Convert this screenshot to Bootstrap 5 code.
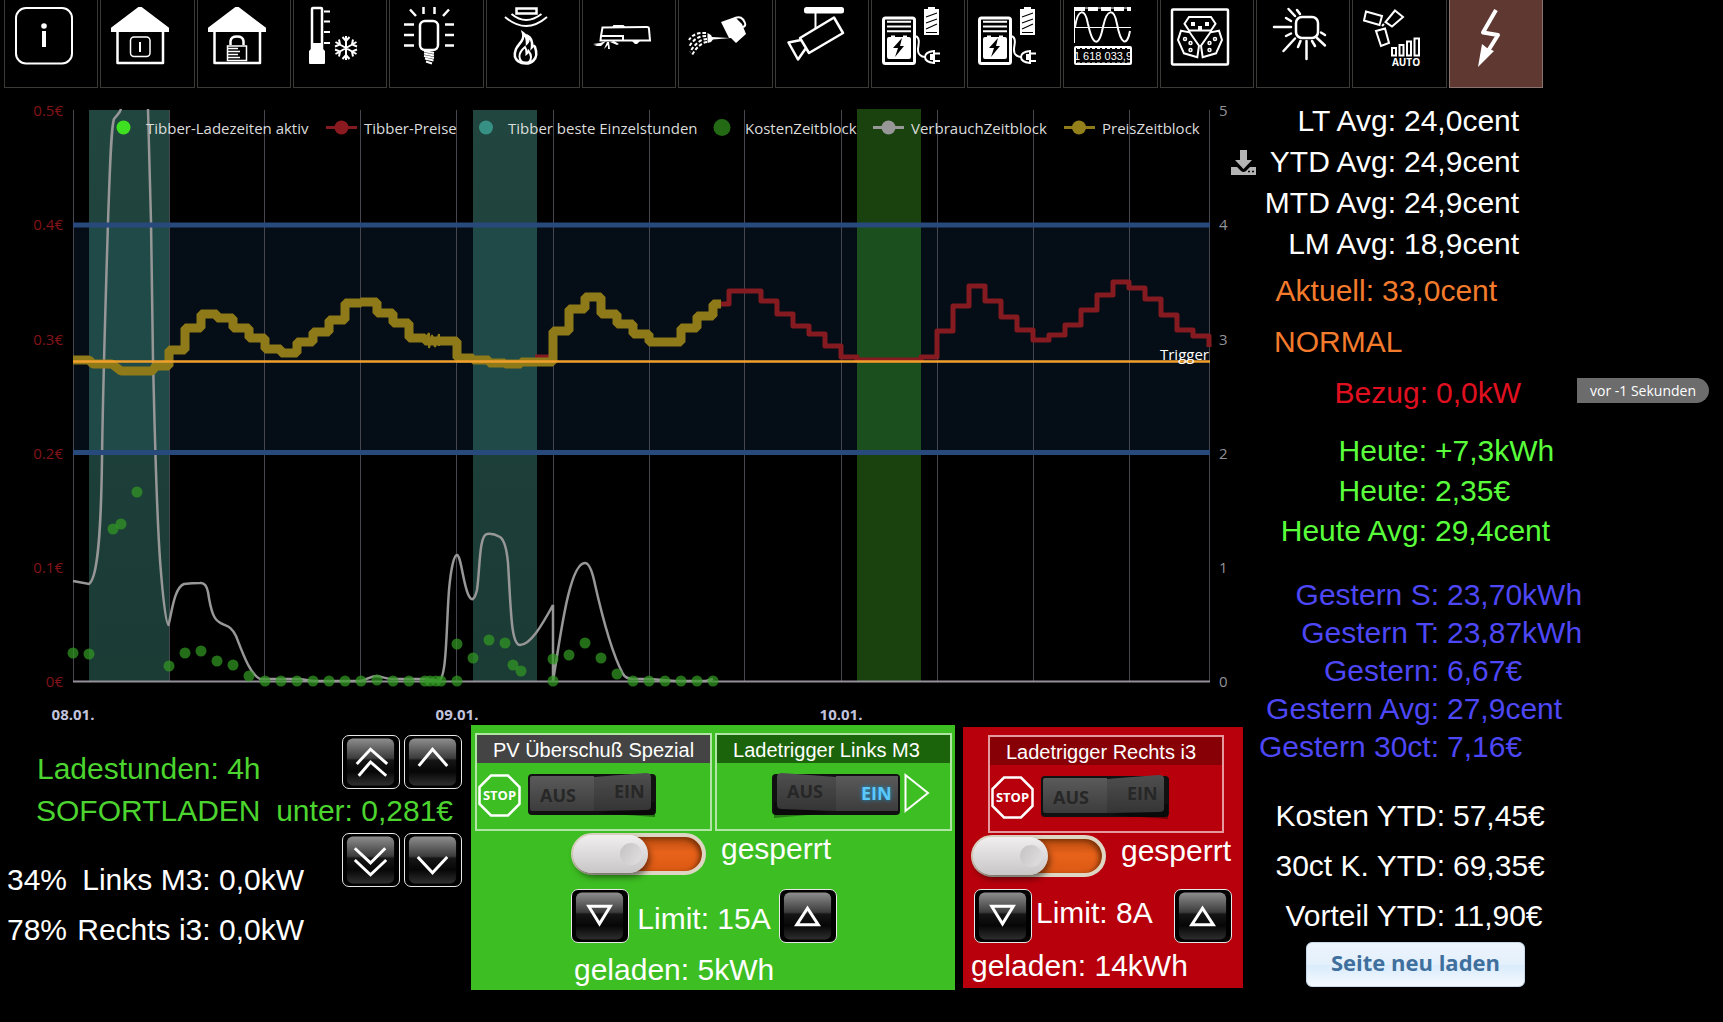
<!DOCTYPE html>
<html lang="de">
<head>
<meta charset="utf-8">
<meta name="viewport" content="width=device-width, initial-scale=1">
<title>Strompreise</title>
<link href="https://cdn.jsdelivr.net/npm/bootstrap@5.3.0/dist/css/bootstrap.min.css" rel="stylesheet">
<style>
body{background:#000;color:#fff;font-family:"Liberation Sans",Arial,sans-serif;font-size:30px}
.tiles{padding:0 180px 0 4px;gap:2px}
.tile{flex:1 1 0;min-width:0;height:88px;padding:7px 0 0 10px;border:1px solid #3a3a37;border-top:0;color:#fff}
.tile.active{background:#5e3831;border-color:#8b746f}
.tile svg{display:block;width:58px;height:58px;overflow:visible;fill:none;stroke:currentColor;stroke-width:2}
.tile .solid{fill:currentColor;stroke:none}
.tile .bold-lines{stroke-width:3}
.chart{display:block;width:100%;height:auto;font-family:"Open Sans","Noto Sans",sans-serif;font-size:15px}
.values{flex:0 0 465px}
.val-name{text-align:right;padding-right:8px}
.g-avg{margin-top:12px;line-height:41px}
.g-avg .val-name{width:146px}
.g-now{margin-top:1px;line-height:51px;color:#f47b2c}
.g-now .val-name{width:124px}
.g-now .bezug{color:#e01020}
.g-now .bezug .val-name{width:178px}
.g-heute{margin-top:13px;line-height:40px;color:#5aff3c}
.g-heute .val-name{width:177px}
.g-gestern{margin-top:25px;line-height:38px;color:#4d47f5}
.g-gestern .val-name{width:189px}
.g-ytd{margin-top:25px;line-height:50px}
.g-ytd .val-name{width:195px}
.state{padding-left:16px}
.ago{background:#6c6c6c;font:14px/25px "Open Sans",sans-serif;padding:0 13px;border-radius:0 13px 13px 0;margin-right:14px}
.reload{margin:1px 0 0 48px;width:219px;height:45px;padding:0 0 5px;border:1px solid #c5d9ea;border-radius:6px;background:linear-gradient(#edf4fc,#e4f0fc 50%,#d9ebfc 51%,#f4f9fe);color:#3f6f9c;font:bold 22px/1 "Open Sans","Noto Sans",sans-serif}
.status{flex:1 1 0;padding:10px 9px 0 7px}
.hours{color:#4cd52f;padding-left:30px;line-height:41px}
.limit-line{color:#4cd52f;padding:0 9px 0 29px;line-height:44px}
.cars{width:297px;padding-top:22px;line-height:50px}
.key{width:58px;height:54px;padding:0;border:1px solid #e8e8e8;border-radius:7px;background:#000;flex:none}
.key svg{display:block;width:56px;height:52px}
.keys{gap:4px}
.wallbox{line-height:40px}
.wb-green{width:484px;background:#3dbe22;padding:8px 3px 0 4px}
.wb-red{width:280px;background:#b8000c;margin:2px 15px 2px 8px;padding:8px 11px 2px 8px}
.wb-red .trigger{margin:0 8px 0 17px}
.trigger-pair{gap:3px}
.trigger{border:2px solid rgba(255,255,255,.6);height:98px;flex:1 1 0}
.trigger-title{font-size:20px;line-height:30px;height:28px;text-align:center}
.t-gray{background:#444}
.t-green{background:#1c640b;padding-right:14px}
.t-red{background:#860006;padding-right:10px}
.trigger-row{padding:9px 20px 0 1px;gap:7px}
.trigger-row.to-end{gap:4px}
.trigger svg{display:block}
.stop-sign{margin-top:2px}
.rocker{border:0;padding:0;background:none;width:129px;height:46px}
.wb-body{margin-left:96px}
.lock-row{height:58px;gap:15px;line-height:36px}
.wb-red .lock-row{height:56px}
.slide{appearance:none;width:135px;height:42px;margin:2px 0 0;border-radius:21px;border:4px solid #ddd6c4;background:linear-gradient(#b84c10,#e8621a 45%,#dc5a14);box-shadow:inset -3px 2px 5px #7c3208;position:relative;flex:none}
.slide::before{content:"";position:absolute;left:-2px;top:-2px;width:75px;height:38px;border-radius:19px;background:linear-gradient(#f0eeee,#c8c6c6);box-shadow:2px 4px 6px rgba(0,0,0,.5)}
.slide::after{content:"";position:absolute;left:45px;top:6px;width:22px;height:22px;border-radius:50%;background:linear-gradient(120deg,#c4c2c2,#e2e0e0)}
.amp-row{line-height:48px}
.wb-green .amp-row{width:266px}
.loaded{margin-top:7px;padding-left:3px}
.wb-red .loaded{margin-top:3px;padding-left:0}
.wb-red .amp-row{padding-left:3px}
</style>
<script src="https://cdn.jsdelivr.net/npm/bootstrap@5.3.0/dist/js/bootstrap.bundle.min.js"></script>
</head>
<body>
<svg width="0" height="0" class="position-absolute" aria-hidden="true">
  <defs>
    <linearGradient id="gloss" x1="0" y1="0" x2="0" y2="1"><stop offset="0" stop-color="#8e8e8e"/><stop offset=".42" stop-color="#3c3c3c"/><stop offset=".46" stop-color="#161616"/><stop offset=".7" stop-color="#060606"/><stop offset="1" stop-color="#2e2e2e"/></linearGradient>
    <linearGradient id="plate" x1="0" y1="0" x2="0" y2="1"><stop offset="0" stop-color="#5a5a5a"/><stop offset="1" stop-color="#3c3c3c"/></linearGradient>
    <filter id="glow" x="-30%" y="-30%" width="160%" height="160%"><feGaussianBlur stdDeviation="2"/></filter>
    <symbol id="face" viewBox="0 0 57 52"><rect x="4" y="2" width="48" height="48" rx="6" fill="url(#gloss)"/></symbol>
    <symbol id="down" viewBox="0 0 57 52"><use href="#face"/><path d="M17 16H39L28 34Z" fill="none" stroke="#fff" stroke-width="3"/></symbol>
    <symbol id="up" viewBox="0 0 57 52"><use href="#face"/><path d="M17 35H39L28 18Z" fill="none" stroke="#fff" stroke-width="3"/></symbol>
    <symbol id="stop" viewBox="0 0 43 43"><path d="M13 1.500H30L41.500 13V30L30 41.500H13L1.500 30V13Z" fill="none" stroke="#fff" stroke-width="2.500"/><text x="21.500" y="26" text-anchor="middle" font-family="Open Sans,sans-serif" font-weight="700" font-size="13" fill="#fff">STOP</text></symbol>
    <symbol id="rocker-off" viewBox="0 0 129 46">
      <rect x="0" y="2" width="128" height="41" rx="4" fill="#111"/><path d="M70 41L127 45V30Z" fill="#000" opacity=".4"/>
      <path d="M4 4H66V39H4Q2 39 2 36V6Q2 4 4 4Z" fill="url(#plate)"/><path d="M66 5L118 1Q123 1 123 5V35Q123 38 118 38L66 39Z" fill="url(#plate)"/><path d="M66 5L118 1Q123 1 123 5V35Q123 38 118 38L66 39Z" fill="#000" opacity=".12"/>
      <text x="12" y="30" font-family="Open Sans,sans-serif" font-weight="700" font-size="18" fill="#272727">AUS</text><text x="86" y="26" font-family="Open Sans,sans-serif" font-weight="700" font-size="18" fill="#272727">EIN</text>
    </symbol>
    <symbol id="rocker-on" viewBox="0 0 129 46">
      <rect x="1" y="2" width="128" height="41" rx="4" fill="#111"/><path d="M59 41L3 46V30Z" fill="#000" opacity=".35"/>
      <path d="M127 4H65V39H127Z" fill="url(#plate)"/><path d="M65 5L11 1Q6 1 6 5V33Q6 37 11 37L65 39Z" fill="url(#plate)"/><path d="M65 5L11 1Q6 1 6 5V33Q6 37 11 37L65 39Z" fill="#000" opacity=".12"/>
      <text x="16" y="26" font-family="Open Sans,sans-serif" font-weight="700" font-size="18" fill="#272727">AUS</text>
      <text x="90" y="28" font-family="Open Sans,sans-serif" font-weight="700" font-size="18" fill="#1795d8" filter="url(#glow)">EIN</text><text x="90" y="28" font-family="Open Sans,sans-serif" font-weight="700" font-size="18" fill="#5cc8fa">EIN</text>
    </symbol>
    <symbol id="house" viewBox="0 0 58 58"><path d="M29 0L58 22V24H0V22Z" fill="#fff"/><path d="M6.500 24V56H52V24" fill="none" stroke="#fff" stroke-width="2.500" stroke-linejoin="round"/></symbol>
    <symbol id="charger" viewBox="0 0 58 58" fill="none" stroke="#fff">
      <rect x="1.500" y="11" width="31" height="45.500" rx="2" stroke-width="3"/><path d="M5 14.800H29M5 19.500H29M5 24.200H29" stroke-width="2"/>
      <path d="M5 32Q5 30 7 30H9V28.500H13V30H21V28.500H25V30H27Q29 30 29 32V50Q29 52 27 52H7Q5 52 5 50Z" fill="#fff" stroke="none"/>
      <path d="M20 31L11 41H16L13 50L22 39H18Z" fill="#000" stroke="none"/>
      <path d="M33 29Q38 30 36.500 38T38 48Q40 50 43 50" stroke-width="2"/><path d="M52 44V56Q43 55 43 50T52 44Z" stroke-width="2"/><path d="M52 46.500H58M52 54H58" stroke-width="2"/><path d="M48 47H51V53H48Z" fill="#fff" stroke="none"/>
      <path d="M46 0H53V2H57V28H42V2H46Z" fill="#fff" stroke="none"/><path d="M44 10L55 6M44 16L55 12M44 22L55 17M44 25.500H55" stroke="#000" stroke-width="1.200"/>
    </symbol>
  </defs>
</svg>

<nav class="tiles d-flex" aria-label="Seiten">
  <a class="tile" href="#" aria-label="Info"><svg viewBox="0 0 58 58"><rect x="1" y="1" width="56" height="55.500" rx="10"/><circle class="solid" cx="29" cy="19" r="2.800"/><path class="solid" d="M27 24H31V40H27Z"/></svg></a>
  <a class="tile" href="#" aria-label="Haus"><svg viewBox="0 0 58 58"><use href="#house"/><rect x="19.500" y="30" width="19.500" height="19.500" rx="3.500" stroke-width="1.500"/><path d="M29 35V45"/></svg></a>
  <a class="tile" href="#" aria-label="Schloss"><svg viewBox="0 0 58 58"><use href="#house"/><path d="M22.500 38V34Q23 29.500 29 29.500T35.500 34V38" stroke-width="2.500"/><path d="M19.500 39H38.500V53.500H19.500Z" stroke-width="1.500"/><path d="M20 41.500H30M20 44.500H32M20 47.500H30M20 50.500H32" stroke-width="1.500"/></svg></a>
  <a class="tile" href="#" aria-label="Heizung"><svg viewBox="0 0 58 58"><path d="M8 44V2Q8 1 9 1H17Q18 1 18 2V44" stroke-width="2.500"/><path class="solid" d="M7 36H19V42L21 44V56Q21 57 20 57H6Q5 57 5 56V44L7 42Z"/><path d="M20 4.500H26M20 14.500H26M20 25H26M20 36H26"/><path d="M42 29V53M31.500 35L52.500 47M31.500 47L52.500 35M38.500 30L42 34L45.500 30M38.500 52L42 48L45.500 52M31 39.500L36 37.500L35 32.500M53 39.500L48 37.500L49 32.500M31 42.500L36 44.500L35 49.500M53 42.500L48 44.500L49 49.500"/></svg></a>
  <a class="tile" href="#" aria-label="Licht"><svg viewBox="0 0 58 58"><rect x="20" y="14" width="18" height="29" rx="5" stroke-width="2.500"/><path d="M24 44L34 46M24 46.500L34 48.500M24 49L34 51M25 51.500L33.500 53.500M26 54.500L32 56.500"/><path d="M4 17.500H14M4 28H14M4 38.500H14M45 17.500H54M45 28H54M45 38.500H54M10 2.500L16 9M23.500 0V7M34.500 0V7M49 2.500L43 9" stroke-width="2.500"/></svg></a>
  <a class="tile" href="#" aria-label="Rauchmelder"><svg viewBox="0 0 58 58"><path d="M19.500 1.500H39.500V6.500H19.500Z" stroke-width="2.500"/><path d="M14.500 7Q29 19 44.500 7M8 10Q29 28 50 10"/><path d="M26 26C28 33 22 36 19 42C14 55 26 56.500 29 56.500S43 54 38 40C37 38 36 39 35 40C36 34 33 30 31 29C32 33 31 35 30 36C30 31 29 28 26 26Z" stroke-width="2.500"/><path d="M28 40Q22 45 22.500 50Q23 55 28 55.500Q34 56 34 50Q34 47 31.500 44Q31 46 29.500 47Q30 43 28 40Z"/></svg></a>
  <a class="tile" href="#" aria-label="Saugroboter"><svg viewBox="0 0 58 58"><path d="M9.500 20.500L54 20Q56 20 56 22L57 33.500H30V29H8L9.500 20.500ZM8 29L7.500 33.500H30M20 20.500L21 19H30L31 20"/><path class="solid" d="M39 34H47L44 37H42ZM0 37L7 36L13 34L8 39H1L4 38ZM11 42L14 35H16L17 42H15V38ZM17 35L24 38L26 37L21 34Z"/></svg></a>
  <a class="tile" href="#" aria-label="Bewässerung"><svg viewBox="0 0 58 58"><path class="solid" d="M32 15L46 10L53 17L57 27L47 36L42 31L24 32.500L22 35L18.500 36V26L22 28L23 30L40 31L35 21Z"/><path d="M46 11Q53 8 56 16Q57 19 54 20"/><path d="M17 26Q5 25 0 33M17 29Q6 29 0 40M18 32Q9 32 1 45M18 35Q10 36 3 48" stroke-dasharray="3.500 2"/></svg></a>
  <a class="tile" href="#" aria-label="Kamera"><svg viewBox="0 0 58 58"><rect class="solid" x="18" y="0" width="40" height="6.500" rx="2.500"/><path d="M29.500 6V21"/><path d="M14 31L48 10.500L57 26L23 46ZM15 33L2.500 35.500L12 52.500L20 41" stroke-width="2.500" stroke-linejoin="round"/></svg></a>
  <a class="tile" href="#" aria-label="Wallbox 1"><svg viewBox="0 0 58 58"><use href="#charger"/></svg></a>
  <a class="tile" href="#" aria-label="Wallbox 2"><svg viewBox="0 0 58 58"><use href="#charger"/></svg></a>
  <a class="tile" href="#" aria-label="Stromzähler"><svg viewBox="0 0 58 58"><path d="M.5 0V36" stroke-width="1"/><path d="M1 2H57" stroke-width="4" stroke-dasharray="10 3"/><path d="M1 1H57M0 20.500H57" stroke-width="1"/><path d="M1 20C4 1 11 1 14 17C19 40 25 40 29 20C33 1 40 1 43 17C47 38 53 40 56 24"/><rect x="1" y="40" width="56" height="17" rx="1"/><path d="M3 41H57M3 56.500H57" stroke-width="2" stroke-dasharray="3 2"/><text class="solid" x="29" y="53" text-anchor="middle" font-family="Liberation Sans,sans-serif" font-size="11">1 618 033,9</text></svg></a>
  <a class="tile" href="#" aria-label="Steckdosen"><svg viewBox="0 0 58 58"><rect x="1" y="2.500" width="56" height="55" rx="1" stroke-width="2.500"/><path d="M13.500 16.700L18 10H40L44.500 16.700L40 23.500H18ZM10 23.700L18.600 25.300L28 38.700L26.300 50.300L13 46.300L7 33ZM48 23.700L39.400 25.300L30 38.700L31.700 50.300L45 46.300L51 33Z"/><path class="solid" d="M20 15H24V19H20ZM34 15H38V19H34ZM27 19H31V23H27Z"/><g stroke-width="1.500"><circle cx="14" cy="32" r="1.500"/><circle cx="19.500" cy="36" r="1.500"/><circle cx="19.500" cy="43" r="1.500"/><circle cx="44" cy="32" r="1.500"/><circle cx="38.500" cy="36" r="1.500"/><circle cx="38.500" cy="43" r="1.500"/></g></svg></a>
  <a class="tile" href="#" aria-label="Sonne"><svg viewBox="0 0 58 58"><rect x="29" y="10" width="22" height="21" rx="6" stroke-width="2.500"/><path d="M7 20H24M39.500 34V52M16.500 44L28 31.500M21.500 2L28 9M30 3L33 7M19 11L24 14M19 29L24 26.500M31 40L33.500 34M48 39L45 34M58 38.500L50 31M58 28L54 25.500" stroke-width="2.500" stroke-linecap="round"/></svg></a>
  <a class="tile" href="#" aria-label="Solar Automatik"><svg viewBox="0 0 58 58"><path d="M3 4.500L19 9L16.500 18L1 13.500ZM32 3.500L40 10L29 19.500L22.500 15ZM13 24L22 21.500L26 36L18 39ZM19 19L21 17" /><path d="M29 41H33V48.500H29ZM36.500 38H40.500V48.500H36.500ZM44 34.500H48V48.500H44ZM51.500 31.500H56V48.500H51.500Z"/><text class="solid" x="43" y="59" text-anchor="middle" font-family="Open Sans,sans-serif" font-weight="700" font-size="10">AUTO</text></svg></a>
  <a class="tile active" href="#" aria-label="Strompreise" aria-current="page"><svg viewBox="0 0 58 58"><path d="M36 3L23 25.500L38 28L28 44" stroke-width="4" stroke-linejoin="round"/><path class="solid" d="M18 60L22 37L27 41L34 44Z"/></svg></a>
</nav>

<div class="d-flex">
<main class="flex-grow-1">
<svg class="chart" viewBox="0 88 1258 637" role="img" aria-label="Preise und Verbrauch">
  <defs>
    <linearGradient id="teal" x1="0" y1="0" x2="0" y2="1"><stop offset="0" stop-color="#21453f"/><stop offset="1" stop-color="#1b3b35"/></linearGradient>
  </defs>
  <rect x="73" y="225" width="1137" height="227" fill="#050d16"/>
  <path d="M73.500 110V681M169.500 110V681M264.500 110V681M360.500 110V681M456.500 110V681M553.500 110V681M649.500 110V681M744.500 110V681M841.500 110V681M937.500 110V681M1033.500 110V681M1129.500 110V681M1209.500 110V681" stroke="#46464e"/>
  <path d="M89 110H169V681H89ZM473 110H537V681H473Z" fill="url(#teal)"/>
  <path d="M89 225H169V452H89ZM473 225H537V452H473Z" fill="#204a48"/>
  <path d="M857 109H921V681H857Z" fill="#19420f"/><path d="M857 225H921V452H857Z" fill="#1b4f1d"/>
  <path d="M73 681.500H1210" stroke="#94909a" stroke-width="2"/>
  <path fill="none" stroke="#851b20" stroke-width="5" stroke-linejoin="round" d="M535 357H550M713 304H729V291H761V301H777V314H793V326H809V334H825V346H841V357H857V360H921V357H937V331H953V306H969V286H985V301H1001V317H1017V330H1033V340H1049V335H1065V325H1081V310H1097V295H1113V282H1129V288H1145V299H1161V315H1177V330H1193V336H1209V347"/>
  <g fill="none" stroke="#979797" stroke-width="2.500">
    <path d="M73 581L89 584C98 578 101 530 102 460C103 380 106 290 108 222C110 165 111 128 114 119C117 115 120 113 121 109M148 109L151 222L153 360C155 440 156 500 160 560C163 600 166 625 168.500 625C172 612 174 588 184 584Q192 583 200 583Q206 582 208 592C211 612 214 619 219 622C226 627 230 624 236 636C243 654 250 674 260 679H300L313 681H361C370 678 372 676 377 676C383 677 386 679 393 679H425L438 681C447 681 446 630 449 590C451 568 454 555 457 555C461 556 463 582 468 594Q473 606 477 590C480 570 479 535 487 534Q493 533 500 537Q506 541 508 563C511 610 511 645 520 645C530 645 541 627 553 605V681C560 640 569 563 585 563Q590 563 594 580C600 607 610 650 623 674Q626 679 633 679H650L675 681H706L713 679"/>
  </g>
  <g id="dots" fill="#329923" fill-opacity=".72"></g>
  <g fill="none" stroke="#8f7a1a" stroke-width="9" stroke-linejoin="bevel">
    <path d="M73 360H89L93 364H112L121 371H152L156 366H169V350H185V328H201V314H217V318H233V328H249V338H265V349H281V353H297V342H313V332H329V320H345V303H361V302H377V313H393V323H409V338H425V341H457V358H473V360H489V363H505V364H521V362H553V331H569V309H585V297H601V314H617V324H633V334H649V342H681V328H697V316H713V304H721"/>
    <path d="M424 340L429 333V348L432 335L435 347L439 334V346" stroke-width="2"/>
  </g>
  <path d="M73 225H1210M73 452.500H1210" stroke="#28497c" stroke-width="5"/>
  <path d="M73 361.500H1210" stroke="#f0a02c" stroke-width="2.500"/>
  <g font-size="15" fill="#831418" text-anchor="end"><text x="63" y="116">0.5€</text><text x="63" y="230">0.4€</text><text x="63" y="345">0.3€</text><text x="63" y="459">0.2€</text><text x="63" y="573">0.1€</text><text x="63" y="687">0€</text></g>
  <g fill="#92929a"><text x="1219" y="116">5</text><text x="1219" y="230">4</text><text x="1219" y="345">3</text><text x="1219" y="459">2</text><text x="1219" y="573">1</text><text x="1219" y="687">0</text></g>
  <g fill="#c3c3dd" font-weight="700" text-anchor="middle"><text x="73" y="720">08.01.</text><text x="457" y="720">09.01.</text><text x="841" y="720">10.01.</text></g>
  <text x="1209" y="360" fill="#fff" text-anchor="end">Trigger</text>
  <g stroke-width="3"><path d="M326 127.500H357" stroke="#851b20"/><path d="M873 127.500H904" stroke="#979797"/><path d="M1064 127.500H1095" stroke="#8f7a1a"/></g>
  <circle cx="123.500" cy="127.500" r="7" fill="#3fe022"/><circle cx="341.500" cy="127.500" r="7" fill="#8a1a1f"/><circle cx="486" cy="127.500" r="7" fill="#369184"/><circle cx="722" cy="127.500" r="8.500" fill="#246a15"/><circle cx="888.500" cy="127.500" r="7" fill="#979797"/><circle cx="1079" cy="127.500" r="7" fill="#94801b"/>
  <g fill="#dcdcdc"><text x="146" y="134">Tibber-Ladezeiten aktiv</text><text x="364" y="134">Tibber-Preise</text><text x="508" y="134">Tibber beste Einzelstunden</text><text x="745" y="134">KostenZeitblock</text><text x="911" y="134">VerbrauchZeitblock</text><text x="1102" y="134">PreisZeitblock</text></g>
  <path d="M1240 150H1247V160H1252L1243.500 169L1235 160H1240Z M1231 167H1237L1241 171Q1243.500 173 1246 171L1250 167H1256V175H1231Z" fill="#b4b4b4"/><path d="M1248 171.500H1250M1252 171.500H1254" stroke="#000" stroke-width="1.500"/>
</svg>

<div class="d-flex align-items-start">
  <section class="status">
    <div class="d-flex justify-content-between align-items-end">
      <div class="hours">Ladestunden: 4h</div>
      <div class="keys d-flex">
        <button class="key" type="button" aria-label="viel mehr"><svg viewBox="0 0 57 52"><use href="#face"/><path d="M14 28L28 13L45 28M16 40L28 26L44 40" fill="none" stroke="#fff" stroke-width="3"/></svg></button>
        <button class="key" type="button" aria-label="mehr"><svg viewBox="0 0 57 52"><use href="#face"/><path d="M14 30L28 13L43 30" fill="none" stroke="#fff" stroke-width="3"/></svg></button>
      </div>
    </div>
    <div class="limit-line d-flex justify-content-between"><span>SOFORTLADEN</span><span>unter: 0,281€</span></div>
    <div class="d-flex justify-content-between align-items-start">
      <div class="cars">
        <div class="d-flex justify-content-between"><span>34%</span><span>Links M3: 0,0kW</span></div>
        <div class="d-flex justify-content-between"><span>78%</span><span>Rechts i3: 0,0kW</span></div>
      </div>
      <div class="keys d-flex">
        <button class="key" type="button" aria-label="viel weniger"><svg viewBox="0 0 57 52"><use href="#face"/><path d="M12 14L28 29L43 14M12 26L28 41L44 26" fill="none" stroke="#fff" stroke-width="3"/></svg></button>
        <button class="key" type="button" aria-label="weniger"><svg viewBox="0 0 57 52"><use href="#face"/><path d="M13 23L28 39L43 23" fill="none" stroke="#fff" stroke-width="3"/></svg></button>
      </div>
    </div>
  </section>

  <section class="wallbox wb-green">
    <div class="trigger-pair d-flex">
      <div class="trigger">
        <div class="trigger-title t-gray">PV Überschuß Spezial</div>
        <div class="trigger-row d-flex"><svg width="43" height="43" class="stop-sign"><use href="#stop"/></svg><button class="rocker" type="button" aria-label="PV Überschuß Spezial schalten"><svg width="129" height="46"><use href="#rocker-off"/></svg></button></div>
      </div>
      <div class="trigger">
        <div class="trigger-title t-green">Ladetrigger Links M3</div>
        <div class="trigger-row to-end d-flex justify-content-end"><button class="rocker" type="button" aria-label="Ladetrigger Links M3 schalten"><svg width="129" height="46"><use href="#rocker-on"/></svg></button><svg width="26" height="43"><path d="M1.500 3V39L24 21Z" fill="none" stroke="#fff" stroke-width="2"/></svg></div>
      </div>
    </div>
    <div class="wb-body">
      <div class="lock-row d-flex align-items-start"><input class="slide" type="checkbox" role="switch" id="lock-m3"><label for="lock-m3">gesperrt</label></div>
      <div class="amp-row d-flex justify-content-between align-items-end">
        <button class="key" type="button" aria-label="Limit senken"><svg><use href="#down"/></svg></button><span>Limit: 15A</span><button class="key" type="button" aria-label="Limit erhöhen"><svg><use href="#up"/></svg></button>
      </div>
      <div class="loaded">geladen: 5kWh</div>
    </div>
  </section>

  <section class="wallbox wb-red">
    <div class="trigger">
      <div class="trigger-title t-red">Ladetrigger Rechts i3</div>
      <div class="trigger-row d-flex"><svg width="43" height="43" class="stop-sign"><use href="#stop"/></svg><button class="rocker" type="button" aria-label="Ladetrigger Rechts i3 schalten"><svg width="129" height="46"><use href="#rocker-off"/></svg></button></div>
    </div>
    <div class="lock-row d-flex align-items-start"><input class="slide" type="checkbox" role="switch" id="lock-i3"><label for="lock-i3">gesperrt</label></div>
    <div class="amp-row d-flex align-items-start">
      <button class="key me-1" type="button" aria-label="Limit senken"><svg><use href="#down"/></svg></button><span>Limit: 8A</span><button class="key ms-auto" type="button" aria-label="Limit erhöhen"><svg><use href="#up"/></svg></button>
    </div>
    <div class="loaded">geladen: 14kWh</div>
  </section>
</div>
</main>

<aside class="values">
  <div class="g-avg">
    <div class="d-flex"><span class="val-name">LT Avg:</span><span>24,0cent</span></div>
    <div class="d-flex"><span class="val-name">YTD Avg:</span><span>24,9cent</span></div>
    <div class="d-flex"><span class="val-name">MTD Avg:</span><span>24,9cent</span></div>
    <div class="d-flex"><span class="val-name">LM Avg:</span><span>18,9cent</span></div>
  </div>
  <div class="g-now">
    <div class="d-flex"><span class="val-name">Aktuell:</span><span>33,0cent</span></div>
    <div class="state">NORMAL</div>
    <div class="bezug d-flex align-items-center"><span class="val-name">Bezug:</span><span>0,0kW</span><span class="ago text-white ms-auto mb-1">vor -1 Sekunden</span></div>
  </div>
  <div class="g-heute">
    <div class="d-flex"><span class="val-name">Heute:</span><span>+7,3kWh</span></div>
    <div class="d-flex"><span class="val-name">Heute:</span><span>2,35€</span></div>
    <div class="d-flex"><span class="val-name">Heute Avg:</span><span>29,4cent</span></div>
  </div>
  <div class="g-gestern">
    <div class="d-flex"><span class="val-name">Gestern S:</span><span>23,70kWh</span></div>
    <div class="d-flex"><span class="val-name">Gestern T:</span><span>23,87kWh</span></div>
    <div class="d-flex"><span class="val-name">Gestern:</span><span>6,67€</span></div>
    <div class="d-flex"><span class="val-name">Gestern Avg:</span><span>27,9cent</span></div>
    <div class="d-flex"><span class="val-name">Gestern 30ct:</span><span>7,16€</span></div>
  </div>
  <div class="g-ytd">
    <div class="d-flex"><span class="val-name">Kosten YTD:</span><span>57,45€</span></div>
    <div class="d-flex"><span class="val-name">30ct K. YTD:</span><span>69,35€</span></div>
    <div class="d-flex"><span class="val-name">Vorteil YTD:</span><span>11,90€</span></div>
  </div>
  <button class="reload d-block" type="button">Seite neu laden</button>
</aside>
</div>
<script>
const cost=[[73,653],[89,654],[113,529],[121,524],[137,492],[169,666],[185,653],[201,651],[217,661],[233,665],[249,676],[265,681],[281,681],[297,681],[313,681],[329,681],[345,681],[361,681],[377,680],[393,681],[409,681],[425,681],[430,681],[436,681],[441,681],[457,644],[457,681],[473,658],[489,640],[505,643],[513,665],[521,671],[553,659],[553,681],[569,655],[585,643],[601,658],[617,674],[633,681],[649,681],[665,681],[681,681],[697,681],[713,681]];
const layer=document.getElementById('dots');
for(const [x,y] of cost){const c=document.createElementNS('http://www.w3.org/2000/svg','circle');c.setAttribute('cx',x);c.setAttribute('cy',y);c.setAttribute('r',5.5);layer.append(c);}
</script>
</body>
</html>
